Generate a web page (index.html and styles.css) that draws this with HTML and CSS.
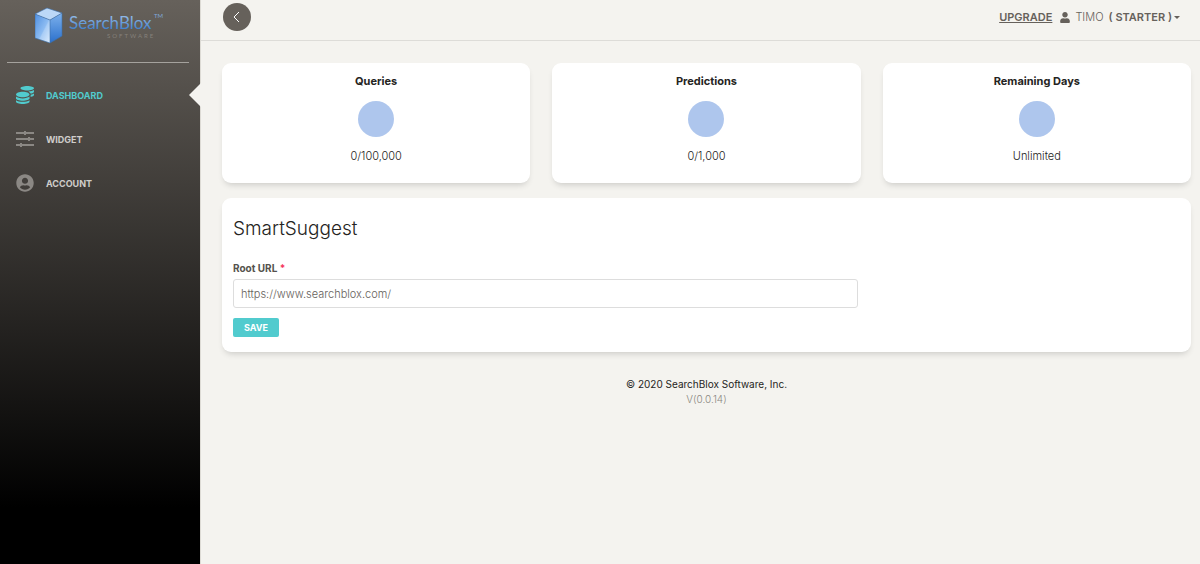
FILE: index.html
```html
<!DOCTYPE html>
<html lang="en">
<head>
    <meta charset="UTF-8">
    <meta name="viewport" content="width=device-width, initial-scale=1.0">
    <title>SearchBlox SmartSuggest</title>
    <link rel="stylesheet" href="styles.css">
</head>
<body>
    <aside class="sidebar">
        <a href="#" class="logo">
            <svg width="128" height="40" viewBox="0 0 128 40">
                <defs>
                    <linearGradient id="leftFace" x1="0" y1="0" x2="1" y2="1">
                        <stop offset="0" stop-color="#4f8fe0"/>
                        <stop offset="0.55" stop-color="#8dbcf2"/>
                        <stop offset="0.6" stop-color="#a9cdf6"/>
                        <stop offset="1" stop-color="#dcecfc"/>
                    </linearGradient>
                    <linearGradient id="rightFace" x1="0" y1="0" x2="0" y2="1">
                        <stop offset="0" stop-color="#7db1ec"/>
                        <stop offset="1" stop-color="#2b70cc"/>
                    </linearGradient>
                    <linearGradient id="wordFill" x1="0" y1="0" x2="0" y2="1">
                        <stop offset="0.2" stop-color="#8fb8e6"/>
                        <stop offset="0.8" stop-color="#4484cf"/>
                    </linearGradient>
                </defs>
                <path d="M0 8 L12 2 L27 7 L15 14 Z" fill="#bcd8f7"/>
                <path d="M0 8 L15 14 V37 L0 32 Z" fill="url(#leftFace)"/>
                <path d="M27 7 L15 14 V37 L27 30 Z" fill="url(#rightFace)"/>
                <path d="M0 8 L12 2 L27 7 V30 L15 37 L0 32 Z M0 8 L15 14 L27 7 M15 14 V37" fill="none" stroke="#3c6ea8" stroke-width="0.6"/>
                <text x="34" y="23" class="logo-word" fill="url(#wordFill)">SearchBlox</text>
                <text x="119" y="12" class="logo-tm">TM</text>
                <text x="72" y="32" class="logo-sub">SOFTWARE</text>
            </svg>
        </a>
        <nav class="menu">
            <a href="#" class="menu-item active">
                <svg width="18" height="18" viewBox="0 0 512 512" fill="currentColor"><path d="M0 405.300V448c0 35.300 86 64 192 64s192-28.700 192-64v-42.700C342.700 434.400 267.200 448 192 448S41.300 434.400 0 405.300zM320 128c106 0 192-28.700 192-64S426 0 320 0 128 28.700 128 64s86 64 192 64zM0 300.400V352c0 35.300 86 64 192 64s192-28.700 192-64v-51.600c-41.300 34-116.900 51.600-192 51.600S41.300 334.400 0 300.400zm416 11c57.300-11.100 96-31.700 96-55.400v-42.700c-23.200 16.400-57.300 27.600-96 34.500v63.600zM192 160C86 160 0 195.800 0 240s86 80 192 80 192-35.800 192-80-86-80-192-80zm219.300 56.300c60-10.800 100.700-32 100.700-56.300v-42.700c-35.500 25.100-96.500 38.600-160.700 41.800 29.500 14.300 51.200 33.500 60 57.200z"/></svg>
                <span>DASHBOARD</span>
            </a>
            <a href="#" class="menu-item">
                <svg width="18" height="18" viewBox="0 0 18 18" fill="currentColor"><path d="M0 2h8V1h2v1h8v2h-8v1H8V4H0zM0 8h12V7h2v1h4v2h-4v1h-2v-1H0zM0 14h4v-1h2v1h12v2H6v1H4v-1H0z"/></svg>
                <span>WIDGET</span>
            </a>
            <a href="#" class="menu-item">
                <svg width="18" height="18" viewBox="0 0 496 512" fill="currentColor"><path d="M248 8C111 8 0 119 0 256s111 248 248 248 248-111 248-248S385 8 248 8zm0 96c48.600 0 88 39.400 88 88s-39.400 88-88 88-88-39.400-88-88 39.400-88 88-88zm0 344c-58.700 0-111.300-26.600-146.500-68.200 18.800-35.400 55.600-59.800 98.500-59.800 2.400 0 4.800.4 7.100 1.100 13 4.200 26.600 6.900 40.900 6.900 14.300 0 28-2.700 40.900-6.900 2.300-.7 4.700-1.100 7.100-1.100 42.900 0 79.700 24.400 98.500 59.800C359.300 421.400 306.700 448 248 448z"/></svg>
                <span>ACCOUNT</span>
            </a>
        </nav>
    </aside>

    <div class="main">
        <header class="navbar">
            <button type="button" class="toggle-btn" aria-label="Collapse menu">
                <svg width="12" height="12" viewBox="0 0 12 12" fill="none" stroke="currentColor"><path d="M8 1L3 6l5 5"/></svg>
            </button>
            <div class="user-nav">
                <a href="#" class="upgrade">UPGRADE</a>
                <button type="button" class="user-btn">
                    <svg width="10" height="11" viewBox="0 0 448 512" fill="currentColor"><path d="M224 256c70.700 0 128-57.300 128-128S294.700 0 224 0 96 57.300 96 128s57.300 128 128 128zm89.600 32h-16.700c-22.200 10.200-46.900 16-72.900 16s-50.600-5.800-72.900-16h-16.700C60.200 288 0 348.200 0 422.400V464c0 26.500 21.500 48 48 48h352c26.500 0 48-21.500 48-48v-41.600c0-74.200-60.200-134.400-134.400-134.400z"/></svg>
                    <span class="user-name">TIMO</span>
                    <span class="user-plan">( STARTER )<i class="caret"></i></span>
                </button>
            </div>
        </header>

        <main class="content">
            <section class="stats">
                <div class="card stat">
                    <h2>Queries</h2>
                    <div class="circle"></div>
                    <p>0/100,000</p>
                </div>
                <div class="card stat">
                    <h2>Predictions</h2>
                    <div class="circle"></div>
                    <p>0/1,000</p>
                </div>
                <div class="card stat">
                    <h2>Remaining Days</h2>
                    <div class="circle"></div>
                    <p>Unlimited</p>
                </div>
            </section>

            <form class="card suggest">
                <h1>SmartSuggest</h1>
                <label for="rootUrl">Root URL <span class="required">*</span></label>
                <input type="text" id="rootUrl" value="https://www.searchblox.com/">
                <button type="button" class="save-btn">SAVE</button>
            </form>
        </main>

        <footer class="footer">
            <div>© 2020 SearchBlox Software, Inc.</div>
            <div class="version">V(0.0.14)</div>
        </footer>
    </div>
</body>
</html>
```
FILE: styles.css
```css
* { box-sizing: border-box; }

body {
    margin: 0;
    display: flex;
    min-height: 100vh;
    font-family: Inter, "Open Sans", sans-serif;
    font-size: 11px;
    line-height: 15px;
    color: #252422;
    background: #f4f3ef;
}

h1, h2, p { margin: 0; }
a { color: inherit; text-decoration: none; }
button, input { font-family: inherit; }
button { cursor: pointer; }
svg { display: block; flex: none; }

/* Sidebar */
.sidebar {
    width: 201px;
    flex: none;
    border-right: 1px solid #dddbd5;
    background: linear-gradient(#66615b 0%, #000 90%);
}

.logo {
    display: block;
    margin: 0 11px 0 7px;
    padding: 6px 0 16px 28px;
    border-bottom: 1px solid #a5a29d;
}

.logo-word { font-family: Lato, sans-serif; font-size: 17px; }
.logo-tm { font-family: Lato, sans-serif; font-size: 6px; fill: #7fa9da; }
.logo-sub { font-family: Lato, sans-serif; font-size: 6px; letter-spacing: 2px; fill: #85817b; }

.menu {
    display: flex;
    flex-direction: column;
    gap: 14px;
    padding-top: 17px;
}

.menu-item {
    position: relative;
    display: flex;
    align-items: center;
    gap: 12px;
    height: 30px;
    padding-left: 16px;
    font-size: 9px;
    font-weight: 700;
    color: #cfcdca;
}

.menu-item svg { color: #8b8884; }
.menu-item.active, .menu-item.active svg { color: #51cbce; }

.menu-item.active::after {
    content: "";
    position: absolute;
    top: 3px;
    right: -1px;
    border: 12px solid transparent;
    border-left: 0;
    border-right-color: #f4f3ef;
}

/* Top bar */
.main { flex: 1; min-width: 0; }

.navbar {
    display: flex;
    justify-content: space-between;
    align-items: center;
    padding: 3px 20px 9px 22px;
    border-bottom: 1px solid #dddcd8;
    color: #66615b;
}

.toggle-btn {
    display: flex;
    align-items: center;
    justify-content: center;
    width: 28px;
    height: 28px;
    padding: 0;
    border: none;
    border-radius: 50%;
    background: #66615b;
    color: #fff;
}

.user-nav { display: flex; align-items: center; gap: 8px; }
.upgrade { font-weight: 600; text-decoration: underline; }

.user-btn {
    display: flex;
    align-items: center;
    gap: 5px;
    padding: 0;
    border: none;
    background: none;
    color: inherit;
    font-size: 11px;
}

.user-name { font-weight: 300; }

.user-plan {
    display: flex;
    align-items: center;
    gap: 2px;
    font-weight: 600;
}

.caret {
    border: 3px solid transparent;
    border-top-color: currentColor;
    border-bottom: 0;
}

/* Cards */
.content { padding: 22px 9px 0 21px; }

.stats {
    display: grid;
    grid-template-columns: repeat(3, 1fr);
    gap: 22px;
    margin-bottom: 15px;
}

.card {
    border-radius: 9px;
    background: #fff;
    box-shadow: 0 4px 7px -3px rgba(0, 0, 0, 0.2);
}

.stat {
    display: flex;
    flex-direction: column;
    align-items: center;
    padding: 11px 10px 19px;
}

.stat h2 { font-size: 11px; font-weight: 700; }
.stat p { font-weight: 300; }

.circle {
    width: 36px;
    height: 36px;
    margin: 12px 0;
    border-radius: 50%;
    background: #aec6ed;
}

.suggest { padding: 19px 11px 15px; }

.suggest h1 {
    margin-bottom: 20px;
    font-size: 19px;
    font-weight: 300;
    line-height: 24px;
}

.suggest label {
    display: block;
    margin-bottom: 3px;
    font-size: 10px;
    font-weight: 700;
    color: #55524d;
}

.required { color: #f5365c; }

.suggest input {
    display: block;
    width: 66%;
    height: 29px;
    padding: 0 7px;
    border: 1px solid #dddddd;
    border-radius: 3px;
    color: #66615b;
    font-size: 11px;
    font-weight: 300;
}

.save-btn {
    display: block;
    height: 19px;
    margin-top: 10px;
    padding: 0 11px;
    border: none;
    border-radius: 2px;
    background: #51cbce;
    color: #fff;
    font-size: 9px;
    font-weight: 700;
}

/* Footer */
.footer {
    padding: 25px 9px 20px 21px;
    font-size: 10px;
    text-align: center;
}

.version { font-weight: 300; color: #8a8781; }
```
